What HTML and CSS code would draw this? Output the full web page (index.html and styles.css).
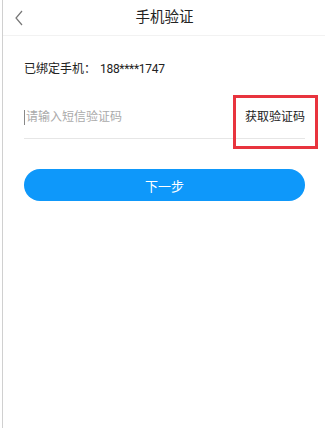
FILE: index.html
```html
<!DOCTYPE html>
<html lang="zh">
<head>
<meta charset="utf-8">
<link rel="stylesheet" href="styles.css">
</head>
<body>
<div class="page">
  <header class="nav">
    <svg class="back" width="10" height="16" viewBox="0 0 10 16"><path d="M8 1 L2 8 L8 15" fill="none" stroke="#777" stroke-width="1.2"/></svg>
    <div class="title">手机验证</div>
  </header>
  <main class="content">
    <div class="bound">已绑定手机：<span class="num">188****1747</span></div>
    <div class="code-row">
      <div class="input"><span class="caret"></span><span class="placeholder">请输入短信验证码</span></div>
      <div class="get-code">获取验证码</div>
    </div>
    <button class="next">下一步</button>
  </main>
</div>
</body>
</html>
```
FILE: styles.css
```css
html, body { margin: 0; padding: 0; background: #fff; }
body { font-family: Roboto, "Noto Sans CJK SC", sans-serif; color: #222; }
.page { width: 323px; height: 428px; border-left: 1px solid #d0d0d0; margin-left: 2px; box-sizing: border-box; }
.nav { height: 35px; border-bottom: 1px solid #f2f2f2; display: flex; align-items: center; justify-content: center; position: relative; }
.back { position: absolute; left: 11px; top: 10px; }
.title { font-size: 14.5px; color: #222; line-height: 20px; margin-left: 1px; }
.content { padding: 0 20px 0 21px; }
.bound { margin-top: 25px; font-size: 12px; line-height: 17px; color: #222; }
.num { margin-left: 4px; letter-spacing: -0.3px; }
.code-row { margin-top: 18px; height: 42px; border-bottom: 1px solid #e6e6e6; display: flex; align-items: center; justify-content: space-between; }
.input { display: flex; align-items: center; }
.caret { width: 1px; height: 15px; background: #888; margin-right: 1px; }
.placeholder { font-size: 12px; line-height: 17px; color: #aaa; }
.get-code { font-size: 12px; line-height: 17px; color: #222; position: relative; }
.get-code::after { content: ""; position: absolute; left: -12px; top: -14px; width: 85px; height: 54px; border: 3px solid #e8343e; box-sizing: border-box; }
.next { margin-top: 30px; display: block; width: 100%; height: 32px; border: none; border-radius: 16px; background: #0e98fa; color: #fff; font-family: inherit; font-size: 13px; padding: 0; }
```
